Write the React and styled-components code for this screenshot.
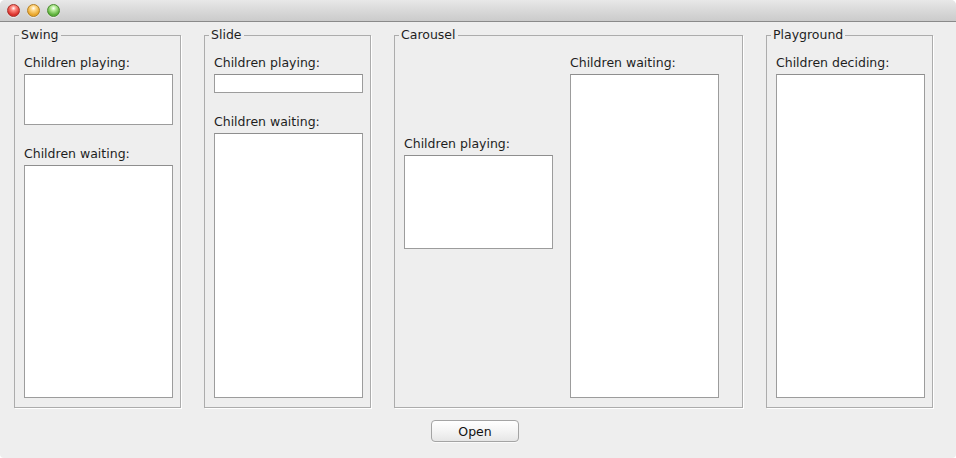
import styled, { createGlobalStyle } from 'styled-components';

const GlobalStyle = createGlobalStyle`
    html, body {
        margin: 0;
        padding: 0;
        background: #ffffff;
    }
    body {
        font-family: 'DejaVu Sans', 'Liberation Sans', sans-serif;
        font-size: 12.5px;
        color: #1e1e1e;
    }
`;

const Window = styled.div`
    width: 956px;
    height: 458px;
    display: flex;
    flex-direction: column;
    background: #eeeeee;
    border-radius: 5px 5px 4px 4px;
    overflow: hidden;
`;

const TitleBar = styled.div`
    height: 21px;
    flex-shrink: 0;
    display: flex;
    align-items: center;
    gap: 7px;
    padding-left: 7px;
    background: linear-gradient(#e8e8e8, #d6d6d6 60%, #cbcbcb);
    border-bottom: 1px solid #8a8a8a;
`;

const Light = styled.span`
    width: 13px;
    height: 13px;
    border-radius: 50%;
    box-sizing: border-box;
    border: 1px solid ${(p) => p.$edge};
    background: radial-gradient(circle at 50% 30%, #ffffff 0, ${(p) => p.$light} 25%, ${(p) => p.$color} 70%);
    box-shadow: 0 1px 0 rgba(255, 255, 255, 0.6);
`;

const Content = styled.div`
    display: flex;
    flex-direction: column;
    align-items: center;
    padding-top: 13px;
`;

const PanelRow = styled.div`
    align-self: stretch;
    display: flex;
    gap: 23px;
    padding-left: 14px;
`;

const Panel = styled.div`
    position: relative;
    box-sizing: border-box;
    width: ${(p) => p.$width}px;
    height: 373px;
    border: 1px solid #acacac;
    box-shadow: 1px 1px 0 #ffffff;
    padding: 19px 7px 9px 9px;
    display: flex;
    gap: 17px;
`;

const Legend = styled.span`
    position: absolute;
    top: -9px;
    left: 4px;
    padding: 0 2px;
    line-height: 16px;
    background: #eeeeee;
`;

const Column = styled.div`
    width: 149px;
    display: flex;
    flex-direction: column;
    padding-top: ${(p) => p.$offset || 0}px;
`;

const Label = styled.div`
    line-height: 16px;
    margin-top: ${(p) => p.$gap || 0}px;
    margin-bottom: 3px;
    white-space: nowrap;
`;

const ListBox = styled.div`
    box-sizing: border-box;
    height: ${(p) => (p.$grow ? 'auto' : `${p.$height}px`)};
    flex: ${(p) => (p.$grow ? '1' : 'none')};
    background: #ffffff;
    border: 1px solid #9c9c9c;
    border-top-color: #8e8e8e;
`;

const ButtonRow = styled.div`
    margin-top: 12px;
    margin-right: 6px;
`;

const Button = styled.button`
    width: 88px;
    height: 22px;
    padding: 0;
    font-family: 'DejaVu Sans', 'Liberation Sans', sans-serif;
    font-size: 12.5px;
    color: #111111;
    border: 1px solid #a4a4a4;
    border-radius: 4px;
    background: linear-gradient(#ffffff, #f4f4f4 50%, #e6e6e6);
    box-shadow: 0 1px 0 rgba(255, 255, 255, 0.7);
`;

export default function App() {
    return (
        <>
            <GlobalStyle />
            <Window>
                <TitleBar>
                    <Light $color="#d9302a" $light="#ff8a80" $edge="#a8312b" />
                    <Light $color="#e8a52a" $light="#ffd98a" $edge="#b57f22" />
                    <Light $color="#5aaf38" $light="#b8ec9a" $edge="#4a8a30" />
                </TitleBar>
                <Content>
                    <PanelRow>
                        <Panel $width={167}>
                            <Legend>Swing</Legend>
                            <Column>
                                <Label>Children playing:</Label>
                                <ListBox $height={51} />
                                <Label $gap={21}>Children waiting:</Label>
                                <ListBox $grow />
                            </Column>
                        </Panel>
                        <Panel $width={167}>
                            <Legend>Slide</Legend>
                            <Column>
                                <Label>Children playing:</Label>
                                <ListBox $height={19} />
                                <Label $gap={21}>Children waiting:</Label>
                                <ListBox $grow />
                            </Column>
                        </Panel>
                        <Panel $width={349}>
                            <Legend>Carousel</Legend>
                            <Column $offset={81}>
                                <Label>Children playing:</Label>
                                <ListBox $height={94} />
                            </Column>
                            <Column>
                                <Label>Children waiting:</Label>
                                <ListBox $grow />
                            </Column>
                        </Panel>
                        <Panel $width={167}>
                            <Legend>Playground</Legend>
                            <Column>
                                <Label>Children deciding:</Label>
                                <ListBox $grow />
                            </Column>
                        </Panel>
                    </PanelRow>
                    <ButtonRow>
                        <Button>Open</Button>
                    </ButtonRow>
                </Content>
            </Window>
        </>
    );
}
